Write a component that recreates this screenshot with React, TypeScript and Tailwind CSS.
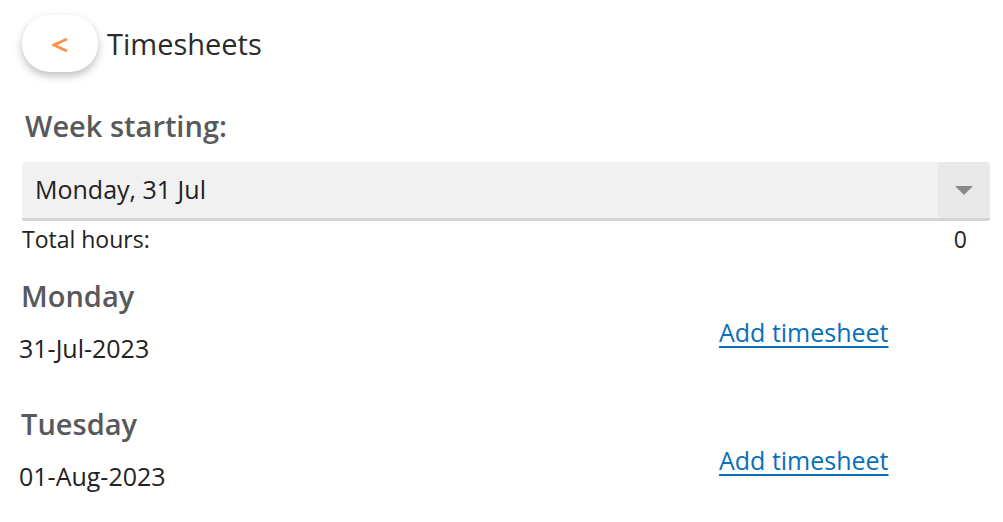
const days = [
  { name: 'Monday', date: '31-Jul-2023' },
  { name: 'Tuesday', date: '01-Aug-2023' },
];

function DayRow({ name, date }: { name: string; date: string }) {
  return (
    <div className="flex h-[128px]">
      <div className="w-[700px]">
        <h2 className="pl-[2px] text-[29px] font-semibold leading-[36px] text-[#58595b]">{name}</h2>
        <p className="mt-[18px] text-[25px] leading-[32px] text-[#222]">{date}</p>
      </div>
      <div className="pt-[38px]">
        <a href="#" className="text-[25px] leading-[32px] text-[#0a6ebd] underline underline-offset-[4px]">
          Add timesheet
        </a>
      </div>
    </div>
  );
}

export default function App() {
  return (
    <div className="h-[522px] w-[1003px] overflow-hidden bg-white font-['Open_Sans',sans-serif]">
      <div className="flex items-center gap-[9px] pl-[22px] pt-[15px]">
        <button className="flex h-[57px] w-[76px] items-center justify-center rounded-[28px] bg-white shadow-[0_4px_8px_rgba(0,0,0,0.25)]">
          <svg width="16" height="16" viewBox="0 0 16 16" className="mt-[3px]">
            <polyline points="15,2 2,8 15,14" fill="none" stroke="#f7944a" strokeWidth="3" strokeLinejoin="miter" />
          </svg>
        </button>
        <h1 className="text-[29px] leading-[36px] text-[#2b2b2b]">Timesheets</h1>
      </div>

      <div className="pl-[22px] pr-[13px]">
        <div className="mt-[36px] pl-[3px] text-[29px] font-semibold leading-[36px] text-[#58595b]">
          Week starting:
        </div>
        <div className="mt-[18px] flex h-[59px] overflow-hidden rounded-t-[4px] rounded-b-[2px] border-b-[3px] border-[#d4d4d4] bg-[#f1f1f1]">
          <div className="flex flex-1 items-center pl-[13px] text-[25px] text-[#222]">Monday, 31 Jul</div>
          <div className="flex w-[52px] items-center justify-center bg-[#e9e9e9]">
            <svg width="18" height="9" viewBox="0 0 18 9">
              <path d="M0 0 L18 0 L9 9 Z" fill="#8a8a8a" />
            </svg>
          </div>
        </div>
        <div className="mt-[3px] flex justify-between pr-[23px] text-[23px] leading-[30px] text-[#222]">
          <span>Total hours:</span>
          <span>0</span>
        </div>
      </div>

      <div className="mt-[24px] pl-[19px]">
        {days.map((d) => (
          <DayRow key={d.name} name={d.name} date={d.date} />
        ))}
      </div>
    </div>
  );
}
